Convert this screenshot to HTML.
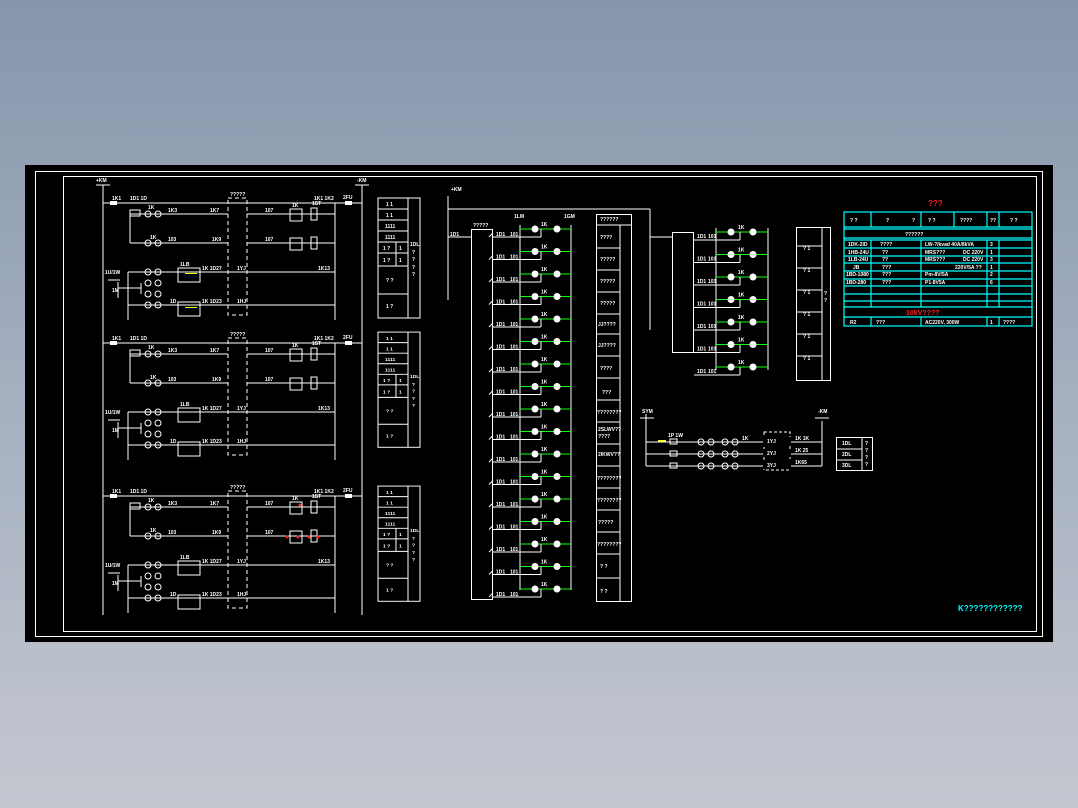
<!DOCTYPE html>
<html><head><meta charset="utf-8"><style>
html,body{margin:0;padding:0}
body{width:1078px;height:808px;overflow:hidden;background:linear-gradient(#8696ac,#a5b0c0 50%,#c4c7d0)}
svg{position:absolute;left:0;top:0}
text{font-family:"Liberation Sans",sans-serif;font-size:5px;fill:#fff;font-weight:bold}
</style></head><body>
<svg width="1078" height="808" viewBox="0 0 1078 808">
<defs>
<g id="circ" stroke="#fff" stroke-width="1" fill="none">
 <line x1="103" y1="203" x2="362" y2="203"/>
 <line x1="130" y1="214" x2="228" y2="214"/><line x1="247" y1="214" x2="335" y2="214"/>
 <line x1="130" y1="243" x2="228" y2="243"/><line x1="247" y1="243" x2="335" y2="243"/>
 <line x1="130" y1="214" x2="130" y2="243"/>
 <line x1="128" y1="272" x2="335" y2="272"/>
 <line x1="128" y1="305" x2="335" y2="305"/>
 <line x1="128" y1="272" x2="128" y2="320"/>
 <line x1="335" y1="203" x2="335" y2="320"/>
 <circle cx="148" cy="214" r="3"/><circle cx="158" cy="214" r="3"/>
 <circle cx="148" cy="243" r="3"/><circle cx="158" cy="243" r="3"/>
 <circle cx="148" cy="272" r="3"/><circle cx="158" cy="272" r="3"/>
 <circle cx="148" cy="283" r="3"/><circle cx="158" cy="283" r="3"/>
 <circle cx="148" cy="294" r="3"/><circle cx="158" cy="294" r="3"/>
 <circle cx="148" cy="305" r="3"/><circle cx="158" cy="305" r="3"/>
 <rect x="178" y="268" width="22" height="14"/><rect x="178" y="302" width="22" height="14"/>
 <rect x="130" y="210" width="10" height="6"/>
 <rect x="228" y="198" width="19" height="117" stroke-dasharray="4 3"/>
 <rect x="290" y="209" width="12" height="12"/><rect x="290" y="238" width="12" height="12"/>
 <rect x="311" y="208" width="6" height="12"/><rect x="311" y="237" width="6" height="12"/>
 <line x1="141" y1="283" x2="141" y2="294"/><line x1="118" y1="288" x2="141" y2="288"/>
 <line x1="118" y1="282" x2="118" y2="298"/><line x1="108" y1="280" x2="120" y2="280"/>
</g>
<g id="ctext">
 <text x="112" y="200">1K1</text><text x="130" y="200">1D1 1D</text><text x="148" y="209">1K</text>
 <text x="168" y="212">1K3</text><text x="210" y="212">1K7</text><text x="265" y="212">107</text>
 <text x="150" y="239">1K</text><text x="168" y="241">103</text><text x="212" y="241">1K9</text><text x="265" y="241">107</text>
 <text x="180" y="266">1LB</text><text x="202" y="270">1K 1D27</text><text x="237" y="270">1YJ</text><text x="318" y="270">1K13</text>
 <text x="170" y="303">1D</text><text x="202" y="303">1K 1D23</text><text x="237" y="303">1HJ</text>
 <text x="105" y="274">1U/1W</text><text x="112" y="292">1M</text>
 <text x="314" y="200">1K1 1K2</text><text x="343" y="199">2FU</text>
 <text x="292" y="207">1K</text><text x="312" y="205">1ST</text>
</g>
<g id="tbl" stroke="#fff" stroke-width="1" fill="none">
 <rect x="378" y="198" width="42" height="120"/><line x1="408" y1="198" x2="408" y2="318"/>
 <line x1="378" y1="209" x2="408" y2="209"/><line x1="378" y1="220" x2="408" y2="220"/>
 <line x1="378" y1="231" x2="408" y2="231"/><line x1="378" y1="242" x2="408" y2="242"/>
 <line x1="378" y1="253" x2="408" y2="253"/><line x1="378" y1="266" x2="408" y2="266"/>
 <line x1="378" y1="294" x2="408" y2="294"/><line x1="396" y1="242" x2="396" y2="266"/>
</g>
<g id="ttext">
 <text x="386" y="206">1 1</text><text x="386" y="217">1 1</text><text x="385" y="228">1111</text><text x="385" y="239">1111</text>
 <text x="383" y="250">1 ?</text><text x="399" y="250">1</text><text x="383" y="262">1 ?</text><text x="399" y="262">1</text>
 <text x="386" y="282">? ?</text><text x="386" y="308">1 ?</text>
 <text x="410" y="246">1DL</text><text x="412" y="254">?</text><text x="412" y="261">?</text><text x="412" y="269">?</text><text x="412" y="276">?</text>
</g>
<g id="lamp">
 <line x1="493" y1="237" x2="520" y2="237" stroke="#fff"/>
 <line x1="520" y1="229" x2="571" y2="229" stroke="#1f1" stroke-width="1"/>
 <circle cx="535" cy="229" r="3.5" fill="#fff"/><circle cx="557" cy="229" r="3.5" fill="#fff"/>
 <line x1="541" y1="229" x2="541" y2="237" stroke="#fff"/><line x1="520" y1="237" x2="541" y2="237" stroke="#fff"/>
 <text x="496" y="236">1D1</text><text x="510" y="236">101</text><text x="541" y="226">1K</text>
 <line x1="489" y1="237" x2="493" y2="233" stroke="#fff"/>
</g>
<g id="lamp2">
 <line x1="694" y1="240" x2="716" y2="240" stroke="#fff"/>
 <line x1="716" y1="232" x2="768" y2="232" stroke="#1f1"/>
 <circle cx="731" cy="232" r="3.5" fill="#fff"/><circle cx="753" cy="232" r="3.5" fill="#fff"/>
 <line x1="740" y1="232" x2="740" y2="240" stroke="#fff"/><line x1="716" y1="240" x2="740" y2="240" stroke="#fff"/>
 <text x="697" y="238">1D1</text><text x="708" y="238">101</text><text x="738" y="229">1K</text>
</g>
<g id="brow" stroke="#fff" fill="none">
 <rect x="670" y="439" width="7" height="5"/>
 <circle cx="701" cy="442" r="3"/><circle cx="711" cy="442" r="3"/><circle cx="725" cy="442" r="3"/><circle cx="735" cy="442" r="3"/>
</g>
</defs>
<rect x="25" y="165" width="1028" height="477" fill="#000"/>
<rect x="35.5" y="171.5" width="1007" height="465" fill="none" stroke="#fff"/>
<rect x="63.5" y="176.5" width="973" height="455" fill="none" stroke="#fff"/>
<g stroke="#fff">
<line x1="103" y1="185" x2="103" y2="615"/><line x1="362" y1="185" x2="362" y2="615"/>
<line x1="96" y1="185" x2="110" y2="185"/><line x1="355" y1="185" x2="369" y2="185"/>
</g>
<text x="96" y="182">+KM</text><text x="357" y="182">-KM</text>
<use href="#circ"/><use href="#circ" transform="translate(0,140)"/><use href="#circ" transform="translate(0,293)"/>
<use href="#ctext"/><use href="#ctext" transform="translate(0,140)"/><use href="#ctext" transform="translate(0,293)"/>
<use href="#tbl"/><use href="#tbl" transform="translate(0,142) scale(1,0.96)"/><use href="#tbl" transform="translate(0,296) scale(1,0.96)"/>
<use href="#ttext"/><use href="#ttext" transform="translate(0,142) scale(1,0.96)"/><use href="#ttext" transform="translate(0,296) scale(1,0.96)"/>
<g fill="#fff"><rect x="110" y="201" width="7" height="4"/><rect x="345" y="201" width="7" height="4"/>
<rect x="110" y="341" width="7" height="4"/><rect x="345" y="341" width="7" height="4"/>
<rect x="110" y="494" width="7" height="4"/><rect x="345" y="494" width="7" height="4"/></g>
<g fill="#ff0"><rect x="185" y="273" width="12" height="1"/><rect x="185" y="307" width="12" height="1"/></g>
<g fill="#f22"><circle cx="300" cy="505" r="1.5"/><circle cx="287" cy="537" r="1.5"/><circle cx="298" cy="537" r="1.5"/><circle cx="309" cy="537" r="1.5"/><circle cx="318" cy="537" r="1.5"/></g>
<text x="230" y="196">?????</text><text x="230" y="336">?????</text><text x="230" y="489">?????</text>
<g stroke="#fff" fill="none">
<line x1="448" y1="196" x2="448" y2="300"/><line x1="448" y1="209" x2="650" y2="209"/>
<line x1="650" y1="209" x2="650" y2="330"/><line x1="448" y1="237" x2="472" y2="237"/>
<rect x="471.5" y="229.5" width="21" height="370"/>
<line x1="520" y1="225" x2="520" y2="590"/><line x1="571" y1="225" x2="571" y2="590"/>
<rect x="596.5" y="214.5" width="35" height="387"/><line x1="620" y1="225" x2="620" y2="602"/>
<line x1="596" y1="225" x2="631" y2="225"/>
<line x1="596" y1="248" x2="620" y2="248"/><line x1="596" y1="270" x2="620" y2="270"/>
<line x1="596" y1="292" x2="620" y2="292"/><line x1="596" y1="314" x2="620" y2="314"/>
<line x1="596" y1="334" x2="620" y2="334"/><line x1="596" y1="356" x2="620" y2="356"/>
<line x1="596" y1="378" x2="620" y2="378"/><line x1="596" y1="400" x2="620" y2="400"/>
<line x1="596" y1="422" x2="620" y2="422"/><line x1="596" y1="444" x2="620" y2="444"/>
<line x1="596" y1="466" x2="620" y2="466"/><line x1="596" y1="488" x2="620" y2="488"/>
<line x1="596" y1="510" x2="620" y2="510"/><line x1="596" y1="532" x2="620" y2="532"/>
<line x1="596" y1="554" x2="620" y2="554"/><line x1="596" y1="578" x2="620" y2="578"/>
</g>
<text x="451" y="191">+KM</text><text x="450" y="236">1D1</text><text x="473" y="227">?????</text>
<text x="514" y="218">1LM</text><text x="564" y="218">1GM</text>
<g><text x="600" y="221">??????</text><text x="600" y="239">????</text><text x="600" y="261">?????</text><text x="600" y="283">?????</text><text x="600" y="305">?????</text><text x="598" y="326">JJ????</text><text x="598" y="347">JJ????</text><text x="600" y="370">????</text><text x="602" y="394">???</text><text x="597" y="414">????????</text><text x="598" y="431">2SLWV??</text><text x="598" y="438">????</text><text x="598" y="456">2IKWV??</text><text x="597" y="480">????????</text><text x="597" y="502">????????</text><text x="598" y="524">?????</text><text x="597" y="546">????????</text><text x="600" y="568">? ?</text><text x="600" y="593">? ?</text></g>
<use href="#lamp"/><use href="#lamp" y="22.5"/><use href="#lamp" y="45"/><use href="#lamp" y="67.5"/><use href="#lamp" y="90"/><use href="#lamp" y="112.5"/><use href="#lamp" y="135"/><use href="#lamp" y="157.5"/><use href="#lamp" y="180"/><use href="#lamp" y="202.5"/><use href="#lamp" y="225"/><use href="#lamp" y="247.5"/><use href="#lamp" y="270"/><use href="#lamp" y="292.5"/><use href="#lamp" y="315"/><use href="#lamp" y="337.5"/><use href="#lamp" y="360"/>
<g stroke="#fff" fill="none">
<line x1="650" y1="237" x2="672" y2="237"/>
<rect x="672.5" y="232.5" width="21" height="120"/>
<line x1="716" y1="228" x2="716" y2="370"/><line x1="768" y1="228" x2="768" y2="370"/>
<rect x="796.5" y="227.5" width="34" height="153"/><line x1="822" y1="227" x2="822" y2="381"/>
<line x1="796" y1="246" x2="822" y2="246"/><line x1="796" y1="268" x2="822" y2="268"/>
<line x1="796" y1="290" x2="822" y2="290"/><line x1="796" y1="312" x2="822" y2="312"/>
<line x1="796" y1="334" x2="822" y2="334"/><line x1="796" y1="356" x2="822" y2="356"/>
<line x1="646" y1="414" x2="646" y2="466"/><line x1="822" y1="421" x2="822" y2="466"/>
<line x1="646" y1="442" x2="822" y2="442"/><line x1="646" y1="454" x2="822" y2="454"/><line x1="646" y1="466" x2="822" y2="466"/>
<line x1="640" y1="418" x2="654" y2="418"/><line x1="815" y1="418" x2="829" y2="418"/>
<rect x="764" y="432" width="26" height="38" stroke-dasharray="3 2"/>
<rect x="836.5" y="437.5" width="36" height="33"/><line x1="862" y1="437" x2="862" y2="471"/>
<line x1="836" y1="449" x2="862" y2="449"/><line x1="836" y1="460" x2="862" y2="460"/>
</g>
<use href="#brow"/><use href="#brow" y="12"/><use href="#brow" y="24"/>
<g fill="#000"><rect x="763" y="437" width="28" height="8"/><rect x="763" y="449" width="28" height="8"/><rect x="763" y="461" width="28" height="8"/></g>
<text x="767" y="443">1YJ</text><text x="767" y="455">2YJ</text><text x="767" y="467">3YJ</text>
<text x="668" y="437">1P 1W</text><text x="742" y="440">1K</text><text x="795" y="440">1K 1K</text><text x="795" y="452">1K 25</text><text x="795" y="464">1K65</text>
<text x="642" y="413">SYM</text><text x="818" y="413">-KM</text>
<text x="842" y="445">1DL</text><text x="842" y="456">2DL</text><text x="842" y="467">3DL</text>
<text x="865" y="445">?</text><text x="865" y="452">?</text><text x="865" y="459">?</text><text x="865" y="466">?</text>
<text x="803" y="250">? 1</text><text x="803" y="272">? 1</text><text x="803" y="294">? 1</text><text x="803" y="316">? 1</text><text x="803" y="338">? 1</text><text x="803" y="360">? 1</text>
<text x="824" y="295">?</text><text x="824" y="302">?</text>
<use href="#lamp2"/><use href="#lamp2" y="22.5"/><use href="#lamp2" y="45"/><use href="#lamp2" y="67.5"/><use href="#lamp2" y="90"/><use href="#lamp2" y="112.5"/><use href="#lamp2" y="135"/>
<text x="928" y="206" style="fill:#f22;font-size:8px">???</text>
<g stroke="#0ff" stroke-width="1.2" fill="none">
<rect x="844" y="212" width="188" height="114"/>
<line x1="844" y1="227" x2="1032" y2="227"/><line x1="844" y1="229" x2="1032" y2="229"/>
<line x1="844" y1="238" x2="1032" y2="238"/><line x1="844" y1="240" x2="1032" y2="240"/>
<line x1="844" y1="248" x2="1032" y2="248"/><line x1="844" y1="256" x2="1032" y2="256"/>
<line x1="844" y1="263" x2="1032" y2="263"/><line x1="844" y1="271" x2="1032" y2="271"/>
<line x1="844" y1="279" x2="1032" y2="279"/><line x1="844" y1="286" x2="1032" y2="286"/>
<line x1="844" y1="294" x2="1032" y2="294"/><line x1="844" y1="301" x2="1032" y2="301"/>
<line x1="844" y1="307" x2="1032" y2="307"/><line x1="844" y1="317" x2="1032" y2="317"/>
<line x1="871" y1="212" x2="871" y2="227"/><line x1="871" y1="240" x2="871" y2="307"/><line x1="871" y1="317" x2="871" y2="326"/>
<line x1="921" y1="212" x2="921" y2="227"/><line x1="921" y1="240" x2="921" y2="307"/><line x1="921" y1="317" x2="921" y2="326"/>
<line x1="954" y1="212" x2="954" y2="227"/>
<line x1="987" y1="212" x2="987" y2="227"/><line x1="987" y1="240" x2="987" y2="307"/><line x1="987" y1="317" x2="987" y2="326"/>
<line x1="999" y1="212" x2="999" y2="227"/><line x1="999" y1="240" x2="999" y2="307"/><line x1="999" y1="317" x2="999" y2="326"/>
</g>
<g style="fill:#f22"><text x="850" y="222">? ?</text><text x="886" y="222">?</text><text x="912" y="222">?</text><text x="928" y="222">? ?</text><text x="960" y="222">????</text><text x="990" y="222">??</text><text x="1010" y="222">? ?</text>
<text x="906" y="315" style="fill:#f22;font-size:7px">10kV????</text></g>
<g><text x="905" y="236">??????</text>
<text x="848" y="246">1DK-2ID</text><text x="880" y="246">????</text><text x="925" y="246">LW-?/kvad 40A/8kVA</text><text x="990" y="246">3</text>
<text x="848" y="254">1HB-24U</text><text x="882" y="254">??</text><text x="925" y="254">MRS???</text><text x="963" y="254">DC 220V</text><text x="990" y="254">1</text>
<text x="848" y="261">1LB-24U</text><text x="882" y="261">??</text><text x="925" y="261">MRS???</text><text x="963" y="261">DC 220V</text><text x="990" y="261">3</text>
<text x="853" y="269">JB</text><text x="882" y="269">???</text><text x="955" y="269">220V/5A ??</text><text x="990" y="269">1</text>
<text x="846" y="276">1BD-1080</text><text x="882" y="276">???</text><text x="925" y="276">Pm-8V/5A</text><text x="990" y="276">2</text>
<text x="846" y="284">1BD-280</text><text x="882" y="284">???</text><text x="925" y="284">P1-8V5A</text><text x="990" y="284">6</text>
<text x="850" y="324">R2</text><text x="876" y="324">???</text><text x="925" y="324">AC220V, 300W</text><text x="990" y="324">1</text><text x="1003" y="324">????</text></g>
<text x="958" y="611" style="fill:#0ff;font-size:8px">K????????????</text>
<g fill="#ff0"><rect x="658" y="440" width="8" height="1.5"/></g>
</svg>
</body></html>
